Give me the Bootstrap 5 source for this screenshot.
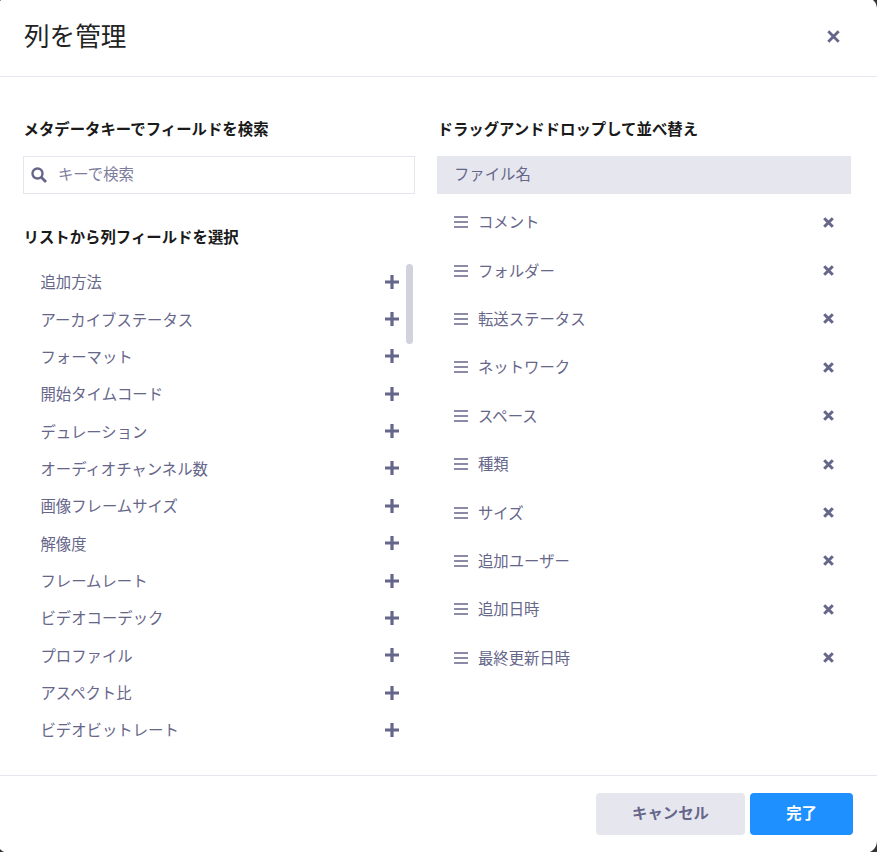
<!DOCTYPE html>
<html lang="ja">
<head>
<meta charset="utf-8">
<title>列を管理</title>
<link href="https://cdn.jsdelivr.net/npm/bootstrap@5.3.0/dist/css/bootstrap.min.css" rel="stylesheet">
<style>
html,body{height:100%;overflow:hidden}
body{background:#333;font-family:"Noto Sans CJK JP","Noto Sans",sans-serif;font-size:15.36px;color:#66668a}
.dlg{width:880px;height:856px;margin:-3px 0 0 -3px;border:0;border-radius:12px;background:#fff}
.dlg-head{height:80px;padding:0 37px 0 27px;border-bottom:1px solid #e6e6ef}
.dlg-title{font-size:25.6px;font-weight:400;color:#222;margin:0 0 2px;line-height:1.2}
.dlg-body{padding:40px 26px 0;gap:22px;min-height:0}
.dlg-foot{height:78px;padding:0 24px 2px 0;border-top:1px solid #e6e6ef;gap:5px}
.col-left{width:392px}
.col-right{width:414px}
.sec-title{font-size:15.4px;font-weight:700;line-height:22px;color:#1a1a1a;margin:0 0 17px .5px}
.sec-title.second{margin-top:31px}
.search-box{height:38px;border:1px solid #e6e6ef;padding-left:7px;gap:11px}
.search-input{border:0;outline:0;padding:0 0 2px;flex:1;font-size:15.36px;color:#66668a;background:transparent}
.search-input::placeholder{color:#7c7c9c;opacity:1}
.pick-list{height:485px;overflow:hidden;position:relative}
.pick-row{height:37.36px;padding:0 16px 2px 17.500px}
.thumb{position:absolute;left:383px;top:0;width:7px;height:80px;border-radius:4px;background:#d2d2dc}
.fixed-row{height:38px;background:#e6e6ef;padding:0 0 2px 17px;margin-bottom:4px}
.drag-row{height:48.4px;padding:0 17px;gap:10px}
.row-label{flex:1;margin-bottom:1px}
.btn-cancel,.btn-done{height:42px;border:0;border-radius:4px;font-size:15.36px;font-weight:700;padding:0 0 1px}
.btn-cancel{width:149px;background:#e6e6ef;color:#66668a}
.btn-done{width:103px;background:#1e90ff;color:#fff}
.btn-cancel:hover{background:#e6e6ef;color:#66668a}
.btn-done:hover{background:#1e90ff;color:#fff}
.ico{display:block;flex:none}
</style>
</head>
<body>
<svg width="0" height="0" class="position-absolute">
<defs>
<symbol id="i-plus" viewBox="0 0 14 14"><path d="M7 0v14M0 7h14" stroke="#66668a" stroke-width="3.2" fill="none"/></symbol>
<symbol id="i-x" viewBox="0 0 11 11"><path d="M1.2 1.2l8.6 8.6M9.8 1.2l-8.6 8.6" stroke="#66668a" stroke-width="3" fill="none"/></symbol>
<symbol id="i-bars" viewBox="0 0 14 12"><path d="M0 1h14M0 6h14M0 11h14" stroke="#66668a" stroke-width="1.6" fill="none"/></symbol>
</defs>
</svg>
<div class="modal-content dlg d-flex flex-column">
  <div class="dlg-head d-flex align-items-center justify-content-between flex-none">
    <h5 class="dlg-title">列を管理</h5>
    <svg class="ico" width="13" height="13" viewBox="0 0 13 13"><path d="M1.3 1.3l10.4 10.4M11.700 1.3L1.300 11.700" stroke="#66668a" stroke-width="2.800" fill="none"/></svg>
  </div>
  <div class="dlg-body d-flex flex-fill">
    <div class="col-left">
      <p class="sec-title">メタデータキーでフィールドを検索</p>
      <div class="search-box d-flex align-items-center">
        <svg class="ico" width="16" height="16" viewBox="0 0 16 16"><circle cx="6.500" cy="6.500" r="5" fill="none" stroke="#66668a" stroke-width="2.400"/><path d="M10.300 10.300L15 15" stroke="#66668a" stroke-width="2.800"/></svg>
        <input class="search-input" type="text" placeholder="キーで検索">
      </div>
      <p class="sec-title second">リストから列フィールドを選択</p>
      <div class="pick-list">
        <div class="pick-row d-flex align-items-center justify-content-between"><span>追加方法</span><svg class="ico" width="14" height="14"><use href="#i-plus"/></svg></div>
        <div class="pick-row d-flex align-items-center justify-content-between"><span>アーカイブステータス</span><svg class="ico" width="14" height="14"><use href="#i-plus"/></svg></div>
        <div class="pick-row d-flex align-items-center justify-content-between"><span>フォーマット</span><svg class="ico" width="14" height="14"><use href="#i-plus"/></svg></div>
        <div class="pick-row d-flex align-items-center justify-content-between"><span>開始タイムコード</span><svg class="ico" width="14" height="14"><use href="#i-plus"/></svg></div>
        <div class="pick-row d-flex align-items-center justify-content-between"><span>デュレーション</span><svg class="ico" width="14" height="14"><use href="#i-plus"/></svg></div>
        <div class="pick-row d-flex align-items-center justify-content-between"><span>オーディオチャンネル数</span><svg class="ico" width="14" height="14"><use href="#i-plus"/></svg></div>
        <div class="pick-row d-flex align-items-center justify-content-between"><span>画像フレームサイズ</span><svg class="ico" width="14" height="14"><use href="#i-plus"/></svg></div>
        <div class="pick-row d-flex align-items-center justify-content-between"><span>解像度</span><svg class="ico" width="14" height="14"><use href="#i-plus"/></svg></div>
        <div class="pick-row d-flex align-items-center justify-content-between"><span>フレームレート</span><svg class="ico" width="14" height="14"><use href="#i-plus"/></svg></div>
        <div class="pick-row d-flex align-items-center justify-content-between"><span>ビデオコーデック</span><svg class="ico" width="14" height="14"><use href="#i-plus"/></svg></div>
        <div class="pick-row d-flex align-items-center justify-content-between"><span>プロファイル</span><svg class="ico" width="14" height="14"><use href="#i-plus"/></svg></div>
        <div class="pick-row d-flex align-items-center justify-content-between"><span>アスペクト比</span><svg class="ico" width="14" height="14"><use href="#i-plus"/></svg></div>
        <div class="pick-row d-flex align-items-center justify-content-between"><span>ビデオビットレート</span><svg class="ico" width="14" height="14"><use href="#i-plus"/></svg></div>
        <div class="thumb"></div>
      </div>
    </div>
    <div class="col-right">
      <p class="sec-title">ドラッグアンドドロップして並べ替え</p>
      <div class="fixed-row d-flex align-items-center">ファイル名</div>
      <div class="drag-row d-flex align-items-center"><svg class="ico" width="14" height="12"><use href="#i-bars"/></svg><span class="row-label">コメント</span><svg class="ico" width="11" height="11"><use href="#i-x"/></svg></div>
      <div class="drag-row d-flex align-items-center"><svg class="ico" width="14" height="12"><use href="#i-bars"/></svg><span class="row-label">フォルダー</span><svg class="ico" width="11" height="11"><use href="#i-x"/></svg></div>
      <div class="drag-row d-flex align-items-center"><svg class="ico" width="14" height="12"><use href="#i-bars"/></svg><span class="row-label">転送ステータス</span><svg class="ico" width="11" height="11"><use href="#i-x"/></svg></div>
      <div class="drag-row d-flex align-items-center"><svg class="ico" width="14" height="12"><use href="#i-bars"/></svg><span class="row-label">ネットワーク</span><svg class="ico" width="11" height="11"><use href="#i-x"/></svg></div>
      <div class="drag-row d-flex align-items-center"><svg class="ico" width="14" height="12"><use href="#i-bars"/></svg><span class="row-label">スペース</span><svg class="ico" width="11" height="11"><use href="#i-x"/></svg></div>
      <div class="drag-row d-flex align-items-center"><svg class="ico" width="14" height="12"><use href="#i-bars"/></svg><span class="row-label">種類</span><svg class="ico" width="11" height="11"><use href="#i-x"/></svg></div>
      <div class="drag-row d-flex align-items-center"><svg class="ico" width="14" height="12"><use href="#i-bars"/></svg><span class="row-label">サイズ</span><svg class="ico" width="11" height="11"><use href="#i-x"/></svg></div>
      <div class="drag-row d-flex align-items-center"><svg class="ico" width="14" height="12"><use href="#i-bars"/></svg><span class="row-label">追加ユーザー</span><svg class="ico" width="11" height="11"><use href="#i-x"/></svg></div>
      <div class="drag-row d-flex align-items-center"><svg class="ico" width="14" height="12"><use href="#i-bars"/></svg><span class="row-label">追加日時</span><svg class="ico" width="11" height="11"><use href="#i-x"/></svg></div>
      <div class="drag-row d-flex align-items-center"><svg class="ico" width="14" height="12"><use href="#i-bars"/></svg><span class="row-label">最終更新日時</span><svg class="ico" width="11" height="11"><use href="#i-x"/></svg></div>
    </div>
  </div>
  <div class="dlg-foot d-flex align-items-center justify-content-end">
    <button type="button" class="btn btn-cancel">キャンセル</button>
    <button type="button" class="btn btn-done">完了</button>
  </div>
</div>
<script src="https://cdn.jsdelivr.net/npm/bootstrap@5.3.0/dist/js/bootstrap.bundle.min.js"></script>
</body>
</html>
